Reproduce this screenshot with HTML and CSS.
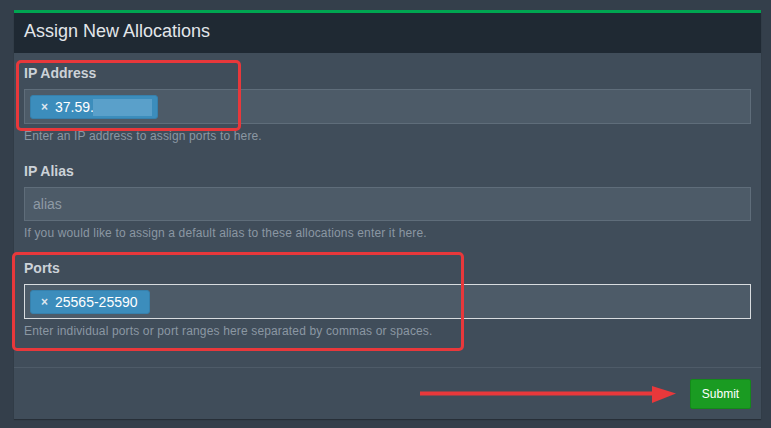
FILE: index.html
```html
<!DOCTYPE html>
<html>
<head>
<meta charset="utf-8">
<link rel="stylesheet" href="styles.css">
</head>
<body>
<div class="box">
  <div class="box-header"><h3 class="box-title">Assign New Allocations</h3></div>
  <div class="box-body">
    <div class="form-group">
      <label class="control-label">IP Address</label>
      <div class="tag-input">
        <span class="tag"><span class="tag-x">×</span><span class="tag-text">37.59.</span><span class="blur"></span></span>
      </div>
      <p class="help">Enter an IP address to assign ports to here.</p>
    </div>
    <div class="form-group">
      <label class="control-label">IP Alias</label>
      <div class="text-input"><span class="placeholder">alias</span></div>
      <p class="help">If you would like to assign a default alias to these allocations enter it here.</p>
    </div>
    <div class="form-group last">
      <label class="control-label">Ports</label>
      <div class="tag-input focused">
        <span class="tag"><span class="tag-x">×</span><span class="tag-text">25565-25590</span></span>
      </div>
      <p class="help">Enter individual ports or port ranges here separated by commas or spaces.</p>
    </div>
  </div>
  <div class="box-footer">
    <button class="btn-submit">Submit</button>
  </div>
</div>
<div class="annot annot-ip"></div>
<div class="annot annot-ports"></div>
<svg class="annot-arrow" width="771" height="428" viewBox="0 0 771 428">
  <line x1="420" y1="393.5" x2="656" y2="393.5" stroke="#e8383b" stroke-width="4"/>
  <polygon points="652,386 676,393.5 652,403" fill="#e8383b"/>
</svg>
</body>
</html>
```
FILE: styles.css
```css
html, body {
  margin: 0;
  padding: 0;
}
body {
  background: #343f4b;
  font-family: "Liberation Sans", Arial, sans-serif;
  width: 771px;
  height: 428px;
  overflow: hidden;
  position: relative;
  padding: 10px 0 0 14px;
  box-sizing: border-box;
}
.box {
  width: 747px;
  background: #404d5a;
  border-top: 3px solid #00a551;
  box-shadow: 0 1px 1px rgba(0,0,0,0.25);
}
.box-header {
  background: #1f2933;
  height: 40px;
  box-sizing: border-box;
  padding: 8px 10px 12px;
}
.box-title {
  margin: 0;
  font-size: 18px;
  line-height: 20px;
  font-weight: normal;
  color: #e2e6ea;
}
.box-body {
  padding: 10px 10px 27px;
}
.form-group {
  margin-bottom: 16px;
}
.form-group.last {
  margin-bottom: 0;
}
.control-label {
  display: block;
  font-size: 14px;
  font-weight: bold;
  line-height: 20px;
  color: #ccd2d8;
  margin-bottom: 6px;
}
.tag-input {
  height: 35px;
  box-sizing: border-box;
  background: #4d5b68;
  border: 1px solid #5f6d7a;
  padding: 5px 5px;
  display: flex;
  align-items: flex-start;
}
.tag-input.focused {
  border-color: #d8dcdf;
}
.text-input {
  height: 34px;
  box-sizing: border-box;
  background: #4d5b68;
  border: 1px solid #5f6d7a;
  padding: 0 8px;
  display: flex;
  align-items: center;
}
.placeholder {
  color: #8f9aa5;
  font-size: 14px;
}
.tag {
  display: inline-flex;
  align-items: center;
  height: 24px;
  box-sizing: border-box;
  background: #3c8dbc;
  border: 1px solid #3680ac;
  border-radius: 3px;
  padding: 0 11px 0 10px;
  color: #fff;
  font-size: 14px;
}
.tag-x {
  color: #dde6ee;
  font-weight: bold;
  font-size: 12px;
  margin-right: 7px;
}
.blur {
  display: inline-block;
  width: 59px;
  height: 17px;
  background: #5aa0ca;
  margin-left: -1px;
  margin-right: -6px;
}
.help {
  margin: 4px 0 0;
  font-size: 12px;
  line-height: 17px;
  letter-spacing: 0.15px;
  color: #8b97a3;
}
.box-footer {
  border-top: 1px solid #4e5b68;
  padding: 11px 10px 10px;
  display: flex;
  justify-content: flex-end;
}
.btn-submit {
  font-family: "Liberation Sans", Arial, sans-serif;
  font-size: 12px;
  line-height: 18px;
  padding: 5px 10px;
  background: #1a9b22;
  border: 1px solid #14891a;
  border-radius: 2px;
  color: #fff;
  width: 61px;
  height: 30px;
  box-sizing: border-box;
}
.annot {
  position: absolute;
  border: 3px solid #e8383b;
  border-radius: 5px;
  box-sizing: border-box;
}
.annot-ip {
  left: 16px;
  top: 60px;
  width: 225px;
  height: 71px;
}
.annot-ports {
  left: 12px;
  top: 252px;
  width: 452px;
  height: 99px;
}
.annot-arrow {
  position: absolute;
  left: 0;
  top: 0;
}
```
